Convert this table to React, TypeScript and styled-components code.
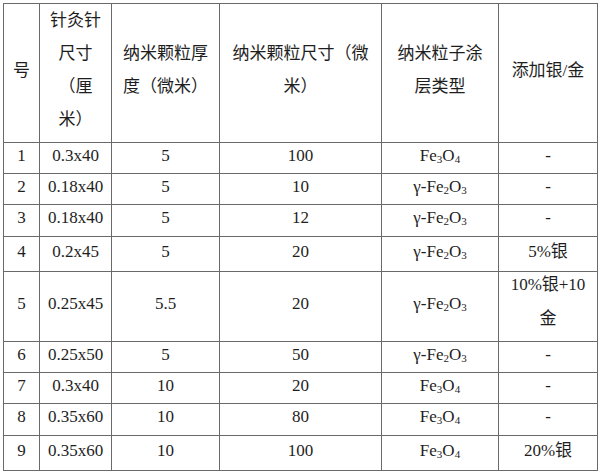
import React from "react";
import styled, { createGlobalStyle } from "styled-components";

const GlobalStyle = createGlobalStyle`
  html, body {
    margin: 0;
    padding: 0;
    background: #ffffff;
  }
`;

type Row = {
    no: string;
    size: string;
    thick: string;
    dim: string;
    coat: "fe3o4" | "gfe2o3";
    extra: string[];
    h: number;
};

const rows: Row[] = [
    { no: "1", size: "0.3x40", thick: "5", dim: "100", coat: "fe3o4", extra: ["-"], h: 31 },
    { no: "2", size: "0.18x40", thick: "5", dim: "10", coat: "gfe2o3", extra: ["-"], h: 31 },
    { no: "3", size: "0.18x40", thick: "5", dim: "12", coat: "gfe2o3", extra: ["-"], h: 32 },
    { no: "4", size: "0.2x45", thick: "5", dim: "20", coat: "gfe2o3", extra: ["5%银"], h: 35 },
    { no: "5", size: "0.25x45", thick: "5.5", dim: "20", coat: "gfe2o3", extra: ["10%银+10", "金"], h: 70 },
    { no: "6", size: "0.25x50", thick: "5", dim: "50", coat: "gfe2o3", extra: ["-"], h: 31 },
    { no: "7", size: "0.3x40", thick: "10", dim: "20", coat: "fe3o4", extra: ["-"], h: 31 },
    { no: "8", size: "0.35x60", thick: "10", dim: "80", coat: "fe3o4", extra: ["-"], h: 32 },
    { no: "9", size: "0.35x60", thick: "10", dim: "100", coat: "fe3o4", extra: ["20%银"], h: 35 },
];

// 표 열 너비 (테두리 기준)
const widths = [36, 72, 108, 162, 117, 99];

function Coating({ kind }: { kind: Row["coat"] }) {
    if (kind === "fe3o4") {
        return (
            <>
                Fe<Sub>3</Sub>O<Sub>4</Sub>
            </>
        );
    }
    return (
        <>
            γ-Fe<Sub>2</Sub>O<Sub>3</Sub>
        </>
    );
}

function Extra({ lines }: { lines: string[] }) {
    if (lines.length === 1) return <>{lines[0]}</>;
    return (
        <Stack>
            {lines.map((l, i) => (
                <React.Fragment key={i}>
                    {i > 0 && <br />}
                    {l}
                </React.Fragment>
            ))}
        </Stack>
    );
}

export default function App() {
    return (
        <>
            <GlobalStyle />
            <Page>
                <Table>
                    <colgroup>
                        {widths.map((w, i) => (
                            <col key={i} style={{ width: w }} />
                        ))}
                    </colgroup>
                    <thead>
                        <HeadRow>
                            <HeadCell>号</HeadCell>
                            <HeadCell>
                                针灸针
                                <br />
                                尺寸
                                <br />
                                （厘
                                <br />
                                米）
                            </HeadCell>
                            <HeadCell>
                                纳米颗粒厚
                                <br />
                                度（微米）
                            </HeadCell>
                            <HeadCell>
                                纳米颗粒尺寸（微
                                <br />
                                米）
                            </HeadCell>
                            <HeadCell>
                                纳米粒子涂
                                <br />
                                层类型
                            </HeadCell>
                            <HeadCell>添加银/金</HeadCell>
                        </HeadRow>
                    </thead>
                    <tbody>
                        {rows.map((r) => (
                            <BodyRow key={r.no} $h={r.h}>
                                <Cell>{r.no}</Cell>
                                <Cell>{r.size}</Cell>
                                <Cell>{r.thick}</Cell>
                                <Cell>{r.dim}</Cell>
                                <Cell>
                                    <Coating kind={r.coat} />
                                </Cell>
                                <Cell $multi={r.extra.length > 1}>
                                    <Extra lines={r.extra} />
                                </Cell>
                            </BodyRow>
                        ))}
                    </tbody>
                </Table>
            </Page>
        </>
    );
}

/* ---------- styled-components ---------- */

const Page = styled.div`
    padding: 3px 0 0 3px;
`;

// quirks 모드에서는 table이 폰트를 상속하지 않으므로 여기서 직접 지정
const Table = styled.table`
    width: 594px;
    table-layout: fixed;
    border-collapse: collapse;
    border: 1px solid #8c8c8c;
    font-family: "Liberation Serif", "Noto Sans CJK SC", serif;
    font-size: 17px;
    color: #1e1e1e;
`;

const HeadRow = styled.tr`
    height: 139px;
`;

const HeadCell = styled.th`
    font-weight: normal;
    text-align: center;
    vertical-align: middle;
    line-height: 33px;
    padding: 0 2px 6px;
    border: 1px solid #6a6a6a;
    white-space: nowrap;
    overflow: hidden;
`;

const BodyRow = styled.tr<{ $h: number }>`
    height: ${(p) => p.$h}px;
`;

const Cell = styled.td<{ $multi?: boolean }>`
    text-align: center;
    vertical-align: middle;
    line-height: ${(p) => (p.$multi ? "34px" : "22px")};
    padding: ${(p) => (p.$multi ? "0 2px" : "0 2px 5px")};
    border: 1px solid #6a6a6a;
    white-space: nowrap;
`;

// 두 줄 셀: 위쪽으로 살짝 당김
const Stack = styled.span`
    display: block;
    margin-top: -10px;
`;

const Sub = styled.sub`
    font-size: 11px;
    line-height: 0;
    vertical-align: -2px;
`;
